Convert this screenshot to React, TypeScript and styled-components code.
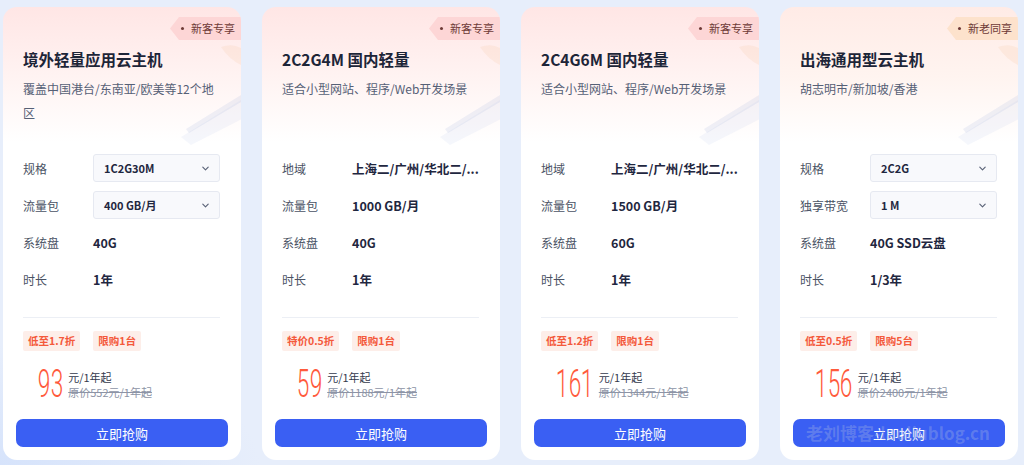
import React from "react";
import styled, { createGlobalStyle } from "styled-components";

const Global = createGlobalStyle`
  html, body { margin: 0; padding: 0; }
  body {
    background: #e7eefb;
    font-family: "Noto Sans CJK SC", "Noto Sans", sans-serif;
    width: 1024px;
    height: 465px;
    overflow: hidden;
  }
`;

const Page = styled.div`
  position: relative;
  width: 1024px;
  height: 465px;
  box-sizing: border-box;
  padding: 7px 0 0 3px;
  display: flex;
  gap: 21px;
  background:
    radial-gradient(ellipse 260px 120px at 0% 100%, #d6e3fb 0%, rgba(214, 227, 251, 0) 100%),
    #e7eefb;
`;

const Card = styled.div<{ $peach?: boolean }>`
  position: relative;
  width: 238px;
  height: 453px;
  box-sizing: border-box;
  border-radius: 14px;
  overflow: hidden;
  background: linear-gradient(
      180deg,
      ${(p) => (p.$peach ? "#ffebe6" : "#ffe6e5")} 0px,
      ${(p) => (p.$peach ? "#fff4f0" : "#fff3f2")} 70px,
      #ffffff 135px
    );
  display: flex;
  flex-direction: column;
  padding: 41px 21px 13px 20px;
`;

const Deco = styled.svg`
  position: absolute;
  right: 0;
  top: 30px;
  width: 90px;
  height: 110px;
  pointer-events: none;
`;

const Tag = styled.div<{ $peach?: boolean }>`
  position: absolute;
  top: 10px;
  right: 0;
  height: 23px;
  width: 71px;
  box-sizing: border-box;
  padding-left: 11px;
  display: flex;
  align-items: center;
  gap: 7px;
  background: ${(p) => (p.$peach ? "#fde2cc" : "#fdd6d6")};
  clip-path: polygon(9px 0, 100% 0, 100% 100%, 9px 100%, 0 50%);
  color: #6e3a36;
  font-size: 11px;
  line-height: 23px;
  white-space: nowrap;
`;

const Dot = styled.span`
  width: 3px;
  height: 3px;
  border-radius: 50%;
  background: #6e3a36;
  flex: none;
`;

const Title = styled.div`
  position: relative;
  font-size: 15.5px;
  font-weight: 700;
  line-height: 22px;
  color: #1d2538;
  white-space: nowrap;
`;

const Sub = styled.div`
  position: relative;
  margin-top: 7px;
  height: 48px;
  font-size: 12px;
  line-height: 24px;
  color: #566076;
`;

const Rows = styled.div`
  position: relative;
  margin-top: 29px;
  display: flex;
  flex-direction: column;
  gap: 9px;
`;

const Row = styled.div`
  display: flex;
  align-items: center;
  height: 28px;
`;

const Label = styled.div`
  width: 70px;
  flex: none;
  font-size: 12px;
  color: #4a5264;
  white-space: nowrap;
`;

const Value = styled.div`
  flex: 1;
  min-width: 0;
  font-size: 12.5px;
  font-weight: 700;
  color: #1f2740;
  white-space: nowrap;
`;

const Select = styled.div`
  flex: 1;
  height: 28px;
  box-sizing: border-box;
  border: 1px solid #e6e9f1;
  border-radius: 3px;
  background: #f8f9fc;
  display: flex;
  align-items: center;
  justify-content: space-between;
  padding: 0 9px 0 10px;
  font-size: 11px;
  font-weight: 700;
  color: #1f2740;
`;

const Divider = styled.div`
  margin-top: 24px;
  height: 1px;
  background: #eceff5;
`;

const Badges = styled.div`
  margin-top: 13px;
  display: flex;
  gap: 13px;
`;

const Badge = styled.span`
  height: 20px;
  line-height: 20px;
  padding: 0 5px;
  background: #fdeee9;
  color: #f4593b;
  font-size: 10.5px;
  font-weight: 700;
  border-radius: 2px;
`;

const PriceRow = styled.div`
  margin-top: 18px;
  padding-left: 12px;
  display: flex;
  align-items: flex-start;
  gap: 8px;
  height: 34px;
`;

const Num = styled.div`
  display: flex;
  color: #ff5a3c;
  font-family: Roboto, "Liberation Sans", sans-serif;
  font-weight: 300;
  font-size: 39px;
  line-height: 34px;
  margin-top: -2px;
`;

const Digit = styled.span`
  display: inline-block;
  width: 12.6px;
  text-align: center;
  transform: scaleX(0.58);
`;

const PriceText = styled.div`
  display: flex;
  flex-direction: column;
  font-size: 11px;
  line-height: 15px;
  padding-top: 1px;
`;

const Unit = styled.span`
  color: #333a4d;
`;

const Orig = styled.span`
  color: #8d94a6;
  text-decoration: line-through;
`;

const Buy = styled.button`
  margin: auto -8px 0 -7px;
  height: 28px;
  border: none;
  border-radius: 7px;
  background: #3a5ff3;
  color: #ffffff;
  font-family: "Noto Sans CJK SC", sans-serif;
  font-size: 13px;
  cursor: pointer;
`;

const Watermark = styled.div`
  position: absolute;
  left: 806px;
  top: 420px;
  font-family: "Noto Sans CJK SC", sans-serif;
  font-size: 17px;
  font-weight: 700;
  color: rgba(170, 185, 225, 0.32);
  white-space: nowrap;
  pointer-events: none;
`;

const Chevron = () => (
  <svg width="9" height="9" viewBox="0 0 10 10" fill="none">
    <path d="M2 3.5 L5 6.5 L8 3.5" stroke="#5b6478" strokeWidth="1.3" strokeLinecap="round" strokeLinejoin="round" />
  </svg>
);

type RowData = { label: string; value: string; select?: boolean };
type CardData = {
  tag: string;
  peach?: boolean;
  title: string;
  sub: string;
  rows: RowData[];
  badges: string[];
  price: string;
  orig: string;
};

const cards: CardData[] = [
  {
    tag: "新客专享",
    title: "境外轻量应用云主机",
    sub: "覆盖中国港台/东南亚/欧美等12个地区",
    rows: [
      { label: "规格", value: "1C2G30M", select: true },
      { label: "流量包", value: "400 GB/月", select: true },
      { label: "系统盘", value: "40G" },
      { label: "时长", value: "1年" },
    ],
    badges: ["低至1.7折", "限购1台"],
    price: "93",
    orig: "原价552元/1年起",
  },
  {
    tag: "新客专享",
    title: "2C2G4M 国内轻量",
    sub: "适合小型网站、程序/Web开发场景",
    rows: [
      { label: "地域", value: "上海二/广州/华北二/..." },
      { label: "流量包", value: "1000 GB/月" },
      { label: "系统盘", value: "40G" },
      { label: "时长", value: "1年" },
    ],
    badges: ["特价0.5折", "限购1台"],
    price: "59",
    orig: "原价1188元/1年起",
  },
  {
    tag: "新客专享",
    title: "2C4G6M 国内轻量",
    sub: "适合小型网站、程序/Web开发场景",
    rows: [
      { label: "地域", value: "上海二/广州/华北二/..." },
      { label: "流量包", value: "1500 GB/月" },
      { label: "系统盘", value: "60G" },
      { label: "时长", value: "1年" },
    ],
    badges: ["低至1.2折", "限购1台"],
    price: "161",
    orig: "原价1344元/1年起",
  },
  {
    tag: "新老同享",
    peach: true,
    title: "出海通用型云主机",
    sub: "胡志明市/新加坡/香港",
    rows: [
      { label: "规格", value: "2C2G", select: true },
      { label: "独享带宽", value: "1 M", select: true },
      { label: "系统盘", value: "40G SSD云盘" },
      { label: "时长", value: "1/3年" },
    ],
    badges: ["低至0.5折", "限购5台"],
    price: "156",
    orig: "原价2400元/1年起",
  },
];

const Decoration = () => (
  <Deco viewBox="0 0 90 110">
    <path d="M95 60 L30 100 L40 108 L95 80 Z" fill="#c9d4ee" opacity="0.18" />
    <path d="M95 55 L35 92 L38 96 L95 62 Z" fill="#aebde3" opacity="0.2" />
    <path d="M70 10 Q85 5 95 15 L95 30 Q80 25 70 10 Z" fill="#f6c9a6" opacity="0.2" />
  </Deco>
);

export default function App() {
  return (
    <>
      <Global />
      <Page>
        {cards.map((c, i) => (
          <Card key={i} $peach={c.peach}>
            <Decoration />
            <Tag $peach={c.peach}>
              <Dot />
              {c.tag}
            </Tag>
            <Title>{c.title}</Title>
            <Sub>{c.sub}</Sub>
            <Rows>
              {c.rows.map((r, j) => (
                <Row key={j}>
                  <Label>{r.label}</Label>
                  {r.select ? (
                    <Select>
                      <span>{r.value}</span>
                      <Chevron />
                    </Select>
                  ) : (
                    <Value>{r.value}</Value>
                  )}
                </Row>
              ))}
            </Rows>
            <Divider />
            <Badges>
              {c.badges.map((b) => (
                <Badge key={b}>{b}</Badge>
              ))}
            </Badges>
            <PriceRow>
              <Num>
                {c.price.split("").map((d, k) => (
                  <Digit key={k}>{d}</Digit>
                ))}
              </Num>
              <PriceText>
                <Unit>元/1年起</Unit>
                <Orig>{c.orig}</Orig>
              </PriceText>
            </PriceRow>
            <Buy>立即抢购</Buy>
          </Card>
        ))}
        <Watermark>老刘博客-laoliublog.cn</Watermark>
      </Page>
    </>
  );
}
